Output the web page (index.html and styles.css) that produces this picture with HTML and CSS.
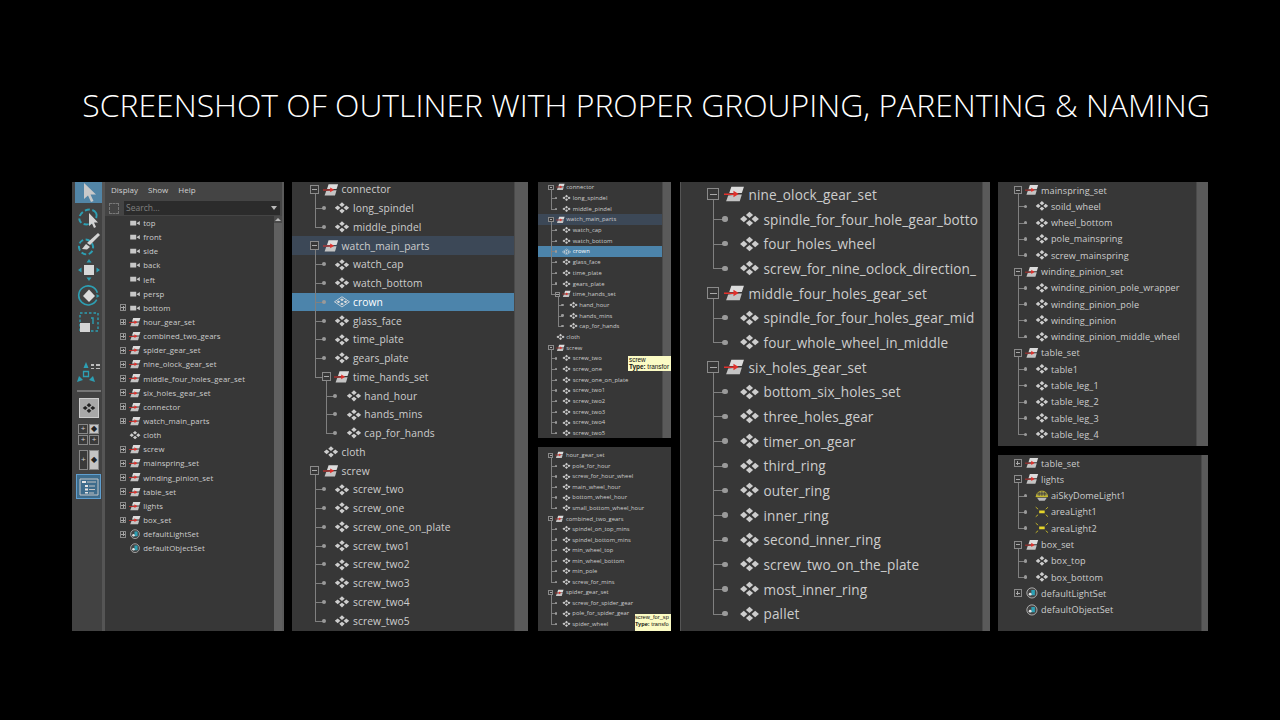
FILE: index.html
```html
<!DOCTYPE html>
<html lang="en">
<head>
<meta charset="utf-8"/>
<title>Screenshot of outliner</title>
<link rel="stylesheet" href="styles.css">
</head>
<body>
<svg class="defs" width="0" height="0">
  <symbol id="grp" viewBox="0 0 20 16">
    <path d="M7 1H19L17 7H5Z" fill="#dcdcdc"/>
    <path d="M14 8.5H17L15 15H2L4 9.5Z" fill="#c4c4c4"/>
    <path d="M0 7.6H9V5L14 8 9 11V8.9H0Z" fill="#e0312c"/>
  </symbol>
  <symbol id="shp" viewBox="0 0 20 14">
    <path d="M10 0L13.4 3.2 10 6 6.6 3.2ZM10 8L13.4 10.8 10 14 6.6 10.8ZM4.6 4L8 7 4.6 10 1 7ZM15.4 4L19 7 15.4 10 12 7Z" fill="currentColor"/>
  </symbol>
  <symbol id="shp-sel" viewBox="0 0 20 14">
    <path d="M10 .6L19.4 7 10 13.4 .6 7Z" fill="none" stroke="#e4e4e4" stroke-width="1"/>
    <path d="M10 2.6L12.4 4.4 10 6.2 7.6 4.4ZM10 7.8L12.4 9.6 10 11.4 7.6 9.6ZM5.6 5.2L8 7 5.6 8.8 3.2 7ZM14.4 5.2L16.8 7 14.4 8.8 12 7Z" fill="#dcdcdc"/>
  </symbol>
  <symbol id="cam" viewBox="0 0 20 14">
    <path d="M2 3H12V11H2ZM13 6.8L18 3.4V10.6L13 7.4Z" fill="#c8c8c8"/>
  </symbol>
  <symbol id="set" viewBox="0 0 20 20">
    <circle cx="10" cy="10" r="8.6" fill="#444" stroke="#c0c0c0" stroke-width="1.4"/>
    <path d="M9 5H15V14H7V11H9Z" fill="#2d9fb3"/>
    <circle cx="7" cy="12" r="2.4" fill="#e4e4e4"/>
  </symbol>
  <symbol id="dome" viewBox="0 0 20 16">
    <path d="M2 8A8 7 0 0 1 18 8Z" fill="#8f8a55" stroke="#d8c92a" stroke-width="1"/>
    <path d="M10 1V8M6 2V8M14 2V8M3 5H17" stroke="#2c2c2c" stroke-width=".8"/>
    <path d="M1 9H19" stroke="#d8c92a" stroke-width="1.4"/>
    <path d="M3 10.5H17L14 15H6Z" fill="#b8b8b8"/>
  </symbol>
  <symbol id="area" viewBox="0 0 20 16">
    <path d="M6 6H14V10H6Z" fill="#e4d42a"/>
    <path d="M1 1L4.5 4M19 1L15.5 4M1 15L4.5 12M19 15L15.5 12" stroke="#d8c92a" stroke-width="1.2"/>
  </symbol>
</svg>

<main class="slide">
  <h1 class="title">SCREENSHOT OF OUTLINER WITH PROPER GROUPING, PARENTING &amp; NAMING</h1>

  <div class="shots">
    <!-- full maya outliner with tool box -->
    <section class="maya">
      <nav class="tools">
        <div class="tool active">
          <svg width="16" height="22" viewBox="0 0 16 22"><path d="M3 1V17L7 13.500 10 20 12.500 19 9.500 12.500 15 12.500Z" fill="#c9c9c9"/></svg>
        </div>
        <div class="tool">
          <svg width="24" height="24" viewBox="0 0 24 24"><ellipse cx="11" cy="11" rx="9" ry="7" transform="rotate(-25 11 11)" fill="none" stroke="#2d9fb3" stroke-width="2" stroke-dasharray="5 2.500"/><path d="M12 7V20L15 17.500 17 22 19 21 17 16.500 21 16.500Z" fill="#d4d4d4"/></svg>
        </div>
        <div class="tool">
          <svg width="24" height="24" viewBox="0 0 24 24"><ellipse cx="9" cy="15" rx="7" ry="7.500" transform="rotate(-30 9 15)" fill="none" stroke="#2d9fb3" stroke-width="2" stroke-dasharray="5 2.500"/><path d="M21 1L23 3 13 13 10 11Z" fill="#d4d4d4"/><path d="M9 12L13 15 10 17.500 5 17Z" fill="#d4d4d4"/></svg>
        </div>
        <div class="tool">
          <svg width="24" height="24" viewBox="0 0 24 24"><path d="M7 7H17V17H7Z" fill="#d8d8d8"/><path d="M12 1L14.500 4.500H9.500ZM12 23L9.500 19.500H14.500ZM1 12L4.500 9.500V14.500ZM23 12L19.500 14.500V9.500Z" fill="#2d9fb3"/></svg>
        </div>
        <div class="tool">
          <svg width="24" height="24" viewBox="0 0 24 24"><path d="M20 15A9.500 9.500 0 1 1 20 8" fill="none" stroke="#2d9fb3" stroke-width="1.600" transform="rotate(5 12 12)"/><path d="M22.500 12L19.500 14V10Z" fill="#2d9fb3"/><path d="M12 5.500L18 12 12 18 6 12Z" fill="#dcdcdc"/></svg>
        </div>
        <div class="tool">
          <svg width="24" height="24" viewBox="0 0 24 24"><path d="M3 3H21V21H3Z" fill="none" stroke="#2d9fb3" stroke-width="1.400" stroke-dasharray="2.500 2"/><path d="M14 8H16V14" fill="none" stroke="#2d9fb3" stroke-width="1.400"/><path d="M3 13H13V22H3Z" fill="#d4d4d4"/></svg>
        </div>
        <div class="tool axis">
          <svg width="26" height="26" viewBox="0 0 26 26"><path d="M10 3L12.500 9H7.500Z" fill="#2d9fb3"/><path d="M1 23L3 17 7 21ZM19 23L17 17 13 21Z" fill="#2d9fb3"/><path d="M7.500 12.500H12.500V17.500H7.500Z" fill="none" stroke="#2d9fb3" stroke-width="1.300"/><path d="M15 5H18V7H15ZM20 5H24V7H20ZM15 9H18V10H15ZM20 9H24V10H20Z" fill="#bdbdbd"/></svg>
        </div>
        <hr class="tool-sep"/>
        <div class="tool-btn">
          <svg width="14" height="10"><use href="#shp"/></svg>
        </div>
        <div class="tool-grid">
          <span class="cell">+</span><span class="cell on">&#9670;</span>
          <span class="cell">+</span><span class="cell">+</span>
        </div>
        <div class="tool-split">
          <span class="cell">+</span><span class="cell on">&#9670;</span>
        </div>
        <div class="tool-out">
          <svg width="20" height="18" viewBox="0 0 20 18"><path d="M1 1H19V17H1Z" fill="none" stroke="#c4c4c4" stroke-width="1"/><path d="M3 3H7V5H3ZM6 7H9V9H6ZM6 10.500H9V12.500H6ZM6 14H9V15.500H6Z" fill="#e4e4e4"/><path d="M8 4H17M10 8H16M10 11.500H16M10 15H15" stroke="#c4c4c4" stroke-width="1"/></svg>
        </div>
      </nav>

      <div class="outliner">
        <div class="menubar"><span>Display</span><span>Show</span><span>Help</span></div>
        <div class="searchbar">
          <span class="frame"></span>
          <div class="search">Search...<span class="caret"></span></div>
        </div>
        <div class="tree-wrap">
          <div class="tree">
            <ul>
              <li><div class="row"><i class="slot"></i><svg class="ic"><use href="#cam"/></svg><span>top</span></div></li>
              <li><div class="row"><i class="slot"></i><svg class="ic"><use href="#cam"/></svg><span>front</span></div></li>
              <li><div class="row"><i class="slot"></i><svg class="ic"><use href="#cam"/></svg><span>side</span></div></li>
              <li><div class="row"><i class="slot"></i><svg class="ic"><use href="#cam"/></svg><span>back</span></div></li>
              <li><div class="row"><i class="slot"></i><svg class="ic"><use href="#cam"/></svg><span>left</span></div></li>
              <li><div class="row"><i class="slot"></i><svg class="ic"><use href="#cam"/></svg><span>persp</span></div></li>
              <li><div class="row"><i class="slot plus"></i><svg class="ic"><use href="#cam"/></svg><span>bottom</span></div></li>
              <li><div class="row"><i class="slot plus"></i><svg class="ic"><use href="#grp"/></svg><span>hour_gear_set</span></div></li>
              <li><div class="row"><i class="slot plus"></i><svg class="ic"><use href="#grp"/></svg><span>combined_two_gears</span></div></li>
              <li><div class="row"><i class="slot plus"></i><svg class="ic"><use href="#grp"/></svg><span>spider_gear_set</span></div></li>
              <li><div class="row"><i class="slot plus"></i><svg class="ic"><use href="#grp"/></svg><span>nine_olock_gear_set</span></div></li>
              <li><div class="row"><i class="slot plus"></i><svg class="ic"><use href="#grp"/></svg><span>middle_four_holes_gear_set</span></div></li>
              <li><div class="row"><i class="slot plus"></i><svg class="ic"><use href="#grp"/></svg><span>six_holes_gear_set</span></div></li>
              <li><div class="row"><i class="slot plus"></i><svg class="ic"><use href="#grp"/></svg><span>connector</span></div></li>
              <li><div class="row"><i class="slot plus"></i><svg class="ic"><use href="#grp"/></svg><span>watch_main_parts</span></div></li>
              <li><div class="row"><i class="slot"></i><svg class="ic"><use href="#shp"/></svg><span>cloth</span></div></li>
              <li><div class="row"><i class="slot plus"></i><svg class="ic"><use href="#grp"/></svg><span>screw</span></div></li>
              <li><div class="row"><i class="slot plus"></i><svg class="ic"><use href="#grp"/></svg><span>mainspring_set</span></div></li>
              <li><div class="row"><i class="slot plus"></i><svg class="ic"><use href="#grp"/></svg><span>winding_pinion_set</span></div></li>
              <li><div class="row"><i class="slot plus"></i><svg class="ic"><use href="#grp"/></svg><span>table_set</span></div></li>
              <li><div class="row"><i class="slot plus"></i><svg class="ic"><use href="#grp"/></svg><span>lights</span></div></li>
              <li><div class="row"><i class="slot plus"></i><svg class="ic"><use href="#grp"/></svg><span>box_set</span></div></li>
              <li><div class="row"><i class="slot plus"></i><svg class="ic"><use href="#set"/></svg><span>defaultLightSet</span></div></li>
              <li><div class="row"><i class="slot"></i><svg class="ic"><use href="#set"/></svg><span>defaultObjectSet</span></div></li>
            </ul>
          </div>
          <div class="scrollbar"><span class="up"></span><span class="thumb"></span></div>
        </div>
      </div>
    </section>

    <!-- big crop, watch parts -->
    <section class="panel p2">
      <div class="tree">
        <ul>
          <li><div class="row"><i class="slot minus"></i><svg class="ic"><use href="#grp"/></svg><span>connector</span></div>
            <ul>
              <li><div class="row"><i class="slot dot"></i><svg class="ic"><use href="#shp"/></svg><span>long_spindel</span></div></li>
              <li><div class="row"><i class="slot dot"></i><svg class="ic"><use href="#shp"/></svg><span>middle_pindel</span></div></li>
            </ul>
          </li>
          <li><div class="row parent"><i class="slot minus"></i><svg class="ic"><use href="#grp"/></svg><span>watch_main_parts</span></div>
            <ul>
              <li><div class="row"><i class="slot dot"></i><svg class="ic"><use href="#shp"/></svg><span>watch_cap</span></div></li>
              <li><div class="row"><i class="slot dot"></i><svg class="ic"><use href="#shp"/></svg><span>watch_bottom</span></div></li>
              <li><div class="row sel"><i class="slot dot"></i><svg class="ic"><use href="#shp-sel"/></svg><span>crown</span></div></li>
              <li><div class="row"><i class="slot dot"></i><svg class="ic"><use href="#shp"/></svg><span>glass_face</span></div></li>
              <li><div class="row"><i class="slot dot"></i><svg class="ic"><use href="#shp"/></svg><span>time_plate</span></div></li>
              <li><div class="row"><i class="slot dot"></i><svg class="ic"><use href="#shp"/></svg><span>gears_plate</span></div></li>
              <li><div class="row"><i class="slot minus"></i><svg class="ic"><use href="#grp"/></svg><span>time_hands_set</span></div>
                <ul>
                  <li><div class="row"><i class="slot dot"></i><svg class="ic"><use href="#shp"/></svg><span>hand_hour</span></div></li>
                  <li><div class="row"><i class="slot dot"></i><svg class="ic"><use href="#shp"/></svg><span>hands_mins</span></div></li>
                  <li><div class="row"><i class="slot dot"></i><svg class="ic"><use href="#shp"/></svg><span>cap_for_hands</span></div></li>
                </ul>
              </li>
            </ul>
          </li>
          <li><div class="row"><i class="slot"></i><svg class="ic"><use href="#shp"/></svg><span>cloth</span></div></li>
          <li><div class="row"><i class="slot minus"></i><svg class="ic"><use href="#grp"/></svg><span>screw</span></div>
            <ul>
              <li><div class="row"><i class="slot dot"></i><svg class="ic"><use href="#shp"/></svg><span>screw_two</span></div></li>
              <li><div class="row"><i class="slot dot"></i><svg class="ic"><use href="#shp"/></svg><span>screw_one</span></div></li>
              <li><div class="row"><i class="slot dot"></i><svg class="ic"><use href="#shp"/></svg><span>screw_one_on_plate</span></div></li>
              <li><div class="row"><i class="slot dot"></i><svg class="ic"><use href="#shp"/></svg><span>screw_two1</span></div></li>
              <li><div class="row"><i class="slot dot"></i><svg class="ic"><use href="#shp"/></svg><span>screw_two2</span></div></li>
              <li><div class="row"><i class="slot dot"></i><svg class="ic"><use href="#shp"/></svg><span>screw_two3</span></div></li>
              <li><div class="row"><i class="slot dot"></i><svg class="ic"><use href="#shp"/></svg><span>screw_two4</span></div></li>
              <li><div class="row"><i class="slot dot"></i><svg class="ic"><use href="#shp"/></svg><span>screw_two5</span></div></li>
            </ul>
          </li>
        </ul>
      </div>
      <div class="strip"></div>
    </section>

    <!-- small crops -->
    <div class="stack col3">
      <section class="panel p3a">
        <div class="tree">
          <ul>
            <li><div class="row"><i class="slot minus"></i><svg class="ic"><use href="#grp"/></svg><span>connector</span></div>
              <ul>
                <li><div class="row"><i class="slot dot"></i><svg class="ic"><use href="#shp"/></svg><span>long_spindel</span></div></li>
                <li><div class="row"><i class="slot dot"></i><svg class="ic"><use href="#shp"/></svg><span>middle_pindel</span></div></li>
              </ul>
            </li>
            <li><div class="row parent"><i class="slot minus"></i><svg class="ic"><use href="#grp"/></svg><span>watch_main_parts</span></div>
              <ul>
                <li><div class="row"><i class="slot dot"></i><svg class="ic"><use href="#shp"/></svg><span>watch_cap</span></div></li>
                <li><div class="row"><i class="slot dot"></i><svg class="ic"><use href="#shp"/></svg><span>watch_bottom</span></div></li>
                <li><div class="row sel"><i class="slot dot"></i><svg class="ic"><use href="#shp-sel"/></svg><span>crown</span></div></li>
                <li><div class="row"><i class="slot dot"></i><svg class="ic"><use href="#shp"/></svg><span>glass_face</span></div></li>
                <li><div class="row"><i class="slot dot"></i><svg class="ic"><use href="#shp"/></svg><span>time_plate</span></div></li>
                <li><div class="row"><i class="slot dot"></i><svg class="ic"><use href="#shp"/></svg><span>gears_plate</span></div></li>
                <li><div class="row"><i class="slot minus"></i><svg class="ic"><use href="#grp"/></svg><span>time_hands_set</span></div>
                  <ul>
                    <li><div class="row"><i class="slot dot"></i><svg class="ic"><use href="#shp"/></svg><span>hand_hour</span></div></li>
                    <li><div class="row"><i class="slot dot"></i><svg class="ic"><use href="#shp"/></svg><span>hands_mins</span></div></li>
                    <li><div class="row"><i class="slot dot"></i><svg class="ic"><use href="#shp"/></svg><span>cap_for_hands</span></div></li>
                  </ul>
                </li>
              </ul>
            </li>
            <li><div class="row"><i class="slot"></i><svg class="ic"><use href="#shp"/></svg><span>cloth</span></div></li>
            <li><div class="row"><i class="slot minus"></i><svg class="ic"><use href="#grp"/></svg><span>screw</span></div>
              <ul>
                <li><div class="row"><i class="slot dot"></i><svg class="ic"><use href="#shp"/></svg><span>screw_two</span></div></li>
                <li><div class="row"><i class="slot dot"></i><svg class="ic"><use href="#shp"/></svg><span>screw_one</span></div></li>
                <li><div class="row"><i class="slot dot"></i><svg class="ic"><use href="#shp"/></svg><span>screw_one_on_plate</span></div></li>
                <li><div class="row"><i class="slot dot"></i><svg class="ic"><use href="#shp"/></svg><span>screw_two1</span></div></li>
                <li><div class="row"><i class="slot dot"></i><svg class="ic"><use href="#shp"/></svg><span>screw_two2</span></div></li>
                <li><div class="row"><i class="slot dot"></i><svg class="ic"><use href="#shp"/></svg><span>screw_two3</span></div></li>
                <li><div class="row"><i class="slot dot"></i><svg class="ic"><use href="#shp"/></svg><span>screw_two4</span></div></li>
                <li><div class="row"><i class="slot dot"></i><svg class="ic"><use href="#shp"/></svg><span>screw_two5</span></div></li>
              </ul>
            </li>
          </ul>
        </div>
        <div class="strip"></div>
        <div class="tip tip-a">screw<br/><b>Type:</b> transfor</div>
      </section>
      <section class="panel p3b">
        <div class="tree">
          <ul>
            <li><div class="row"><i class="slot minus"></i><svg class="ic"><use href="#grp"/></svg><span>hour_gear_set</span></div>
              <ul>
                <li><div class="row"><i class="slot dot"></i><svg class="ic"><use href="#shp"/></svg><span>pole_for_hour</span></div></li>
                <li><div class="row"><i class="slot dot"></i><svg class="ic"><use href="#shp"/></svg><span>screw_for_hour_wheel</span></div></li>
                <li><div class="row"><i class="slot dot"></i><svg class="ic"><use href="#shp"/></svg><span>main_wheel_hour</span></div></li>
                <li><div class="row"><i class="slot dot"></i><svg class="ic"><use href="#shp"/></svg><span>bottom_wheel_hour</span></div></li>
                <li><div class="row"><i class="slot dot"></i><svg class="ic"><use href="#shp"/></svg><span>small_bottom_wheel_hour</span></div></li>
              </ul>
            </li>
            <li><div class="row"><i class="slot minus"></i><svg class="ic"><use href="#grp"/></svg><span>combined_two_gears</span></div>
              <ul>
                <li><div class="row"><i class="slot dot"></i><svg class="ic"><use href="#shp"/></svg><span>spindel_on_top_mins</span></div></li>
                <li><div class="row"><i class="slot dot"></i><svg class="ic"><use href="#shp"/></svg><span>spindel_bottom_mins</span></div></li>
                <li><div class="row"><i class="slot dot"></i><svg class="ic"><use href="#shp"/></svg><span>min_wheel_top</span></div></li>
                <li><div class="row"><i class="slot dot"></i><svg class="ic"><use href="#shp"/></svg><span>min_wheel_bottom</span></div></li>
                <li><div class="row"><i class="slot dot"></i><svg class="ic"><use href="#shp"/></svg><span>min_pole</span></div></li>
                <li><div class="row"><i class="slot dot"></i><svg class="ic"><use href="#shp"/></svg><span>screw_for_mins</span></div></li>
              </ul>
            </li>
            <li><div class="row"><i class="slot minus"></i><svg class="ic"><use href="#grp"/></svg><span>spider_gear_set</span></div>
              <ul>
                <li><div class="row"><i class="slot dot"></i><svg class="ic"><use href="#shp"/></svg><span>screw_for_spider_gear</span></div></li>
                <li><div class="row"><i class="slot dot"></i><svg class="ic"><use href="#shp"/></svg><span>pole_for_spider_gear</span></div></li>
                <li><div class="row"><i class="slot dot"></i><svg class="ic"><use href="#shp"/></svg><span>spider_wheel</span></div></li>
              </ul>
            </li>
          </ul>
        </div>
        <div class="tip tip-b">screw_for_sp<br/><b>Type:</b> transfo</div>
      </section>
    </div>

    <section class="panel p4">
      <div class="tree">
        <ul>
          <li><div class="row"><i class="slot minus"></i><svg class="ic"><use href="#grp"/></svg><span>nine_olock_gear_set</span></div>
            <ul>
              <li><div class="row"><i class="slot dot"></i><svg class="ic"><use href="#shp"/></svg><span>spindle_for_four_hole_gear_botto</span></div></li>
              <li><div class="row"><i class="slot dot"></i><svg class="ic"><use href="#shp"/></svg><span>four_holes_wheel</span></div></li>
              <li><div class="row"><i class="slot dot"></i><svg class="ic"><use href="#shp"/></svg><span>screw_for_nine_oclock_direction_</span></div></li>
            </ul>
          </li>
          <li><div class="row"><i class="slot minus"></i><svg class="ic"><use href="#grp"/></svg><span>middle_four_holes_gear_set</span></div>
            <ul>
              <li><div class="row"><i class="slot dot"></i><svg class="ic"><use href="#shp"/></svg><span>spindle_for_four_holes_gear_mid</span></div></li>
              <li><div class="row"><i class="slot dot"></i><svg class="ic"><use href="#shp"/></svg><span>four_whole_wheel_in_middle</span></div></li>
            </ul>
          </li>
          <li><div class="row"><i class="slot minus"></i><svg class="ic"><use href="#grp"/></svg><span>six_holes_gear_set</span></div>
            <ul>
              <li><div class="row"><i class="slot dot"></i><svg class="ic"><use href="#shp"/></svg><span>bottom_six_holes_set</span></div></li>
              <li><div class="row"><i class="slot dot"></i><svg class="ic"><use href="#shp"/></svg><span>three_holes_gear</span></div></li>
              <li><div class="row"><i class="slot dot"></i><svg class="ic"><use href="#shp"/></svg><span>timer_on_gear</span></div></li>
              <li><div class="row"><i class="slot dot"></i><svg class="ic"><use href="#shp"/></svg><span>third_ring</span></div></li>
              <li><div class="row"><i class="slot dot"></i><svg class="ic"><use href="#shp"/></svg><span>outer_ring</span></div></li>
              <li><div class="row"><i class="slot dot"></i><svg class="ic"><use href="#shp"/></svg><span>inner_ring</span></div></li>
              <li><div class="row"><i class="slot dot"></i><svg class="ic"><use href="#shp"/></svg><span>second_inner_ring</span></div></li>
              <li><div class="row"><i class="slot dot"></i><svg class="ic"><use href="#shp"/></svg><span>screw_two_on_the_plate</span></div></li>
              <li><div class="row"><i class="slot dot"></i><svg class="ic"><use href="#shp"/></svg><span>most_inner_ring</span></div></li>
              <li><div class="row"><i class="slot dot"></i><svg class="ic"><use href="#shp"/></svg><span>pallet</span></div></li>
            </ul>
          </li>
        </ul>
      </div>
      <div class="strip"></div>
    </section>

    <div class="stack col5">
      <section class="panel p5a">
        <div class="tree">
          <ul>
            <li><div class="row"><i class="slot minus"></i><svg class="ic"><use href="#grp"/></svg><span>mainspring_set</span></div>
              <ul>
                <li><div class="row"><i class="slot dot"></i><svg class="ic"><use href="#shp"/></svg><span>soild_wheel</span></div></li>
                <li><div class="row"><i class="slot dot"></i><svg class="ic"><use href="#shp"/></svg><span>wheel_bottom</span></div></li>
                <li><div class="row"><i class="slot dot"></i><svg class="ic"><use href="#shp"/></svg><span>pole_mainspring</span></div></li>
                <li><div class="row"><i class="slot dot"></i><svg class="ic"><use href="#shp"/></svg><span>screw_mainspring</span></div></li>
              </ul>
            </li>
            <li><div class="row"><i class="slot minus"></i><svg class="ic"><use href="#grp"/></svg><span>winding_pinion_set</span></div>
              <ul>
                <li><div class="row"><i class="slot dot"></i><svg class="ic"><use href="#shp"/></svg><span>winding_pinion_pole_wrapper</span></div></li>
                <li><div class="row"><i class="slot dot"></i><svg class="ic"><use href="#shp"/></svg><span>winding_pinion_pole</span></div></li>
                <li><div class="row"><i class="slot dot"></i><svg class="ic"><use href="#shp"/></svg><span>winding_pinion</span></div></li>
                <li><div class="row"><i class="slot dot"></i><svg class="ic"><use href="#shp"/></svg><span>winding_pinion_middle_wheel</span></div></li>
              </ul>
            </li>
            <li><div class="row"><i class="slot minus"></i><svg class="ic"><use href="#grp"/></svg><span>table_set</span></div>
              <ul>
                <li><div class="row"><i class="slot dot"></i><svg class="ic"><use href="#shp"/></svg><span>table1</span></div></li>
                <li><div class="row"><i class="slot dot"></i><svg class="ic"><use href="#shp"/></svg><span>table_leg_1</span></div></li>
                <li><div class="row"><i class="slot dot"></i><svg class="ic"><use href="#shp"/></svg><span>table_leg_2</span></div></li>
                <li><div class="row"><i class="slot dot"></i><svg class="ic"><use href="#shp"/></svg><span>table_leg_3</span></div></li>
                <li><div class="row"><i class="slot dot"></i><svg class="ic"><use href="#shp"/></svg><span>table_leg_4</span></div></li>
              </ul>
            </li>
          </ul>
        </div>
        <div class="strip"></div>
      </section>
      <section class="panel p5b">
        <div class="tree">
          <ul>
            <li><div class="row"><i class="slot plus"></i><svg class="ic"><use href="#grp"/></svg><span>table_set</span></div></li>
            <li><div class="row"><i class="slot minus"></i><svg class="ic"><use href="#grp"/></svg><span>lights</span></div>
              <ul>
                <li><div class="row"><i class="slot dot"></i><svg class="ic"><use href="#dome"/></svg><span>aiSkyDomeLight1</span></div></li>
                <li><div class="row"><i class="slot dot"></i><svg class="ic"><use href="#area"/></svg><span>areaLight1</span></div></li>
                <li><div class="row"><i class="slot dot"></i><svg class="ic"><use href="#area"/></svg><span>areaLight2</span></div></li>
              </ul>
            </li>
            <li><div class="row"><i class="slot minus"></i><svg class="ic"><use href="#grp"/></svg><span>box_set</span></div>
              <ul>
                <li><div class="row"><i class="slot dot"></i><svg class="ic"><use href="#shp"/></svg><span>box_top</span></div></li>
                <li><div class="row"><i class="slot dot"></i><svg class="ic"><use href="#shp"/></svg><span>box_bottom</span></div></li>
              </ul>
            </li>
            <li><div class="row"><i class="slot plus"></i><svg class="ic"><use href="#set"/></svg><span>defaultLightSet</span></div></li>
            <li><div class="row"><i class="slot"></i><svg class="ic"><use href="#set"/></svg><span>defaultObjectSet</span></div></li>
          </ul>
        </div>
        <div class="strip"></div>
      </section>
    </div>
  </div>
</main>
</body>
</html>
```

FILE: styles.css
```css
* {
  box-sizing: border-box;
}
html, body {
  margin: 0;
  background: #000;
}
.defs {
  position: absolute;
}
.slide {
  width: 1280px;
  height: 720px;
  background: #000;
  overflow: hidden;
}
.title {
  margin: 0;
  padding: 80px 0 52px 12px;
  height: 182px;
  font: 300 31.9px/50px "Open Sans", sans-serif;
  color: #fff;
  text-align: center;
  white-space: nowrap;
}
.shots {
  display: flex;
  gap: 8px;
  height: 449px;
  padding-left: 72px;
}
.stack {
  display: flex;
  flex-direction: column;
  gap: 9px;
}
.col3 {
  width: 133px;
  margin: 0 1px 0 2px;
}
.col5 {
  width: 210px;
}

/* tree, everything scales with the font-size of the panel */
.tree {
  flex: 1;
  min-width: 0;
  overflow: hidden;
  isolation: isolate;
  font-family: "Open Sans", sans-serif;
  color: #cdcdcd;
  padding-left: 1.6em;
  white-space: nowrap;
}
.tree ul {
  list-style: none;
  margin: 0;
  padding: 0;
}
.tree ul ul {
  padding-left: 1em;
}
.tree li {
  position: relative;
}
.tree ul ul > li::before {
  content: "";
  position: absolute;
  left: -.6em;
  top: -.45em;
  bottom: 0;
  border-left: 1px solid #808080;
}
.tree ul ul > li:last-child::before {
  bottom: auto;
  height: 1.27em;
}
.tree ul ul > li::after {
  content: "";
  position: absolute;
  left: -.6em;
  top: .82em;
  width: .9em;
  border-top: 1px solid #808080;
}
.row {
  position: relative;
  display: flex;
  align-items: center;
  height: 1.645em;
}
.row span {
  font-size: .9em;
  letter-spacing: .01em;
}
.row.sel {
  color: #fff;
}
.row.sel::before, .row.parent::before {
  content: "";
  position: absolute;
  z-index: -1;
  top: 0;
  bottom: 0;
  left: -100em;
  right: 0;
  background: #4c84ab;
}
.row.parent::before {
  background: #3c4857;
}
.slot {
  position: relative;
  z-index: 1;
  flex: none;
  width: .8em;
  height: .8em;
}
.plus, .minus {
  border: 1px solid #8a8a8a;
  background: #373737;
}
.plus::before, .minus::before {
  content: "";
  position: absolute;
  left: 15%;
  right: 15%;
  top: 50%;
  margin-top: -.5px;
  border-top: 1px solid #a8a8a8;
}
.plus::after {
  content: "";
  position: absolute;
  top: 15%;
  bottom: 15%;
  left: 50%;
  margin-left: -.5px;
  border-left: 1px solid #a8a8a8;
}
.dot::before {
  content: "";
  position: absolute;
  left: 0;
  top: .22em;
  width: .36em;
  height: .36em;
  border-radius: 50%;
  background: #9a9a9a;
}
.ic {
  flex: none;
  width: 1.4em;
  height: 1.2em;
  margin: 0 .25em 0 .3em;
}

/* panels */
.panel {
  position: relative;
  display: flex;
  overflow: hidden;
  background: #373737;
}
.strip {
  flex: none;
  background: #5a5a5a;
  border-left: 1px solid #4a4a4a;
}
.p2 {
  width: 236px;
  font-size: 11.4px;
}
.p2 .tree {
  margin-top: -2px;
}
.p2 .strip {
  width: 14px;
}
.p3a {
  height: 256px;
  font-size: 6.5px;
}
.p3a .strip {
  width: 9px;
}
.p3b {
  height: 184px;
  font-size: 6.42px;
}
.p3b .tree {
  padding-top: 3px;
}
.p4 {
  width: 310px;
  font-size: 15px;
  border-left: 1px solid #555;
}
.p4 .tree {
  padding-left: 1.75em;
}
.p4 .row span {
  font-size: .905em;
}
.p4 .strip {
  width: 8px;
}
.p5a {
  height: 264px;
  font-size: 9.9px;
}
.p5a .strip {
  width: 12px;
}
.p5a .row span, .p5b .row span {
  font-size: .92em;
}
.p5b {
  height: 176px;
  font-size: 9.9px;
}
.p5b .strip {
  width: 7px;
}
.tip {
  position: absolute;
  right: 0;
  padding: 0 1px;
  overflow: hidden;
  white-space: nowrap;
  font: 6.4px/7.2px "Liberation Sans", sans-serif;
  color: #111;
  background: #fbfbc4;
}
.tip-a {
  top: 174px;
  width: 43px;
  height: 15px;
}
.tip-b {
  top: 167px;
  width: 36px;
  height: 17px;
  padding: 0;
  font-size: 5.7px;
}

/* left panel with tool box */
.maya {
  display: flex;
  width: 212px;
  background: #555;
}
.tools {
  flex: none;
  display: flex;
  flex-direction: column;
  align-items: center;
  width: 30px;
  padding-left: 3px;
  background: #424242;
}
.tool {
  display: flex;
  align-items: center;
  justify-content: center;
  flex: none;
  width: 27px;
  height: 26px;
}
.tool.active {
  height: 21px;
  margin-bottom: 2px;
  background: #5285a6;
}
.tool.axis {
  margin-top: 24px;
}
.tool-sep {
  width: 24px;
  margin: 5px 0 6px;
  border: 0;
  border-top: 2px solid #777;
}
.tool-btn {
  display: flex;
  align-items: center;
  justify-content: center;
  width: 20px;
  height: 20px;
  border: 1px solid #ccc;
  color: #222;
  background: #a8a8a8;
}
.tool-grid {
  display: grid;
  grid-template-columns: 1fr 1fr;
  gap: 1px;
  width: 21px;
  height: 21px;
  margin-top: 6px;
}
.tool-split {
  display: grid;
  grid-template-columns: 1fr 1fr;
  gap: 1px;
  width: 20px;
  height: 20px;
  margin-top: 5px;
}
.cell {
  display: flex;
  align-items: center;
  justify-content: center;
  border: 1px solid #888;
  font: 8px/1 "Liberation Sans", sans-serif;
  color: #ccc;
  background: #3a3a3a;
}
.cell.on {
  color: #222;
  background: #c4c4c4;
}
.tool-out {
  display: flex;
  align-items: center;
  justify-content: center;
  width: 25px;
  height: 25px;
  margin-top: 4px;
  border: 1px solid #5f9fd0;
  background: #3e6c8c;
}
.outliner {
  flex: none;
  display: flex;
  flex-direction: column;
  width: 179px;
  margin-left: 3px;
  border-right: 2px solid #5a5a5a;
  background: #444;
}
.menubar {
  display: flex;
  gap: 10px;
  height: 18px;
  padding-left: 6px;
  font: 8px/16px "Open Sans", sans-serif;
  color: #d0d0d0;
}
.searchbar {
  display: flex;
  align-items: center;
  height: 16px;
  padding: 0 2px 0 4px;
}
.frame {
  flex: none;
  width: 10px;
  height: 11px;
  margin-right: 5px;
  border: 1px dashed #777;
}
.search {
  position: relative;
  flex: 1;
  height: 14px;
  padding-left: 2px;
  font: 8.5px/14px "Open Sans", sans-serif;
  color: #808080;
  background: #2b2b2b;
}
.caret {
  position: absolute;
  right: 3px;
  top: 5px;
  border: 3px solid transparent;
  border-top: 4px solid #bbb;
  border-bottom: 0;
}
.tree-wrap {
  flex: 1;
  display: flex;
  min-height: 0;
  background: #373737;
}
.tree-wrap .tree {
  font-size: 8.6px;
  padding-left: 1.7em;
}
.scrollbar {
  flex: none;
  display: flex;
  flex-direction: column;
  align-items: center;
  width: 8px;
  padding-top: 2px;
  background: #4a4a4a;
}
.up {
  flex: none;
  margin-bottom: 2px;
  border: 3px solid transparent;
  border-bottom: 3px solid #bbb;
  border-top: 0;
}
.thumb {
  flex: 1;
  width: 100%;
  background: #606060;
}
```
